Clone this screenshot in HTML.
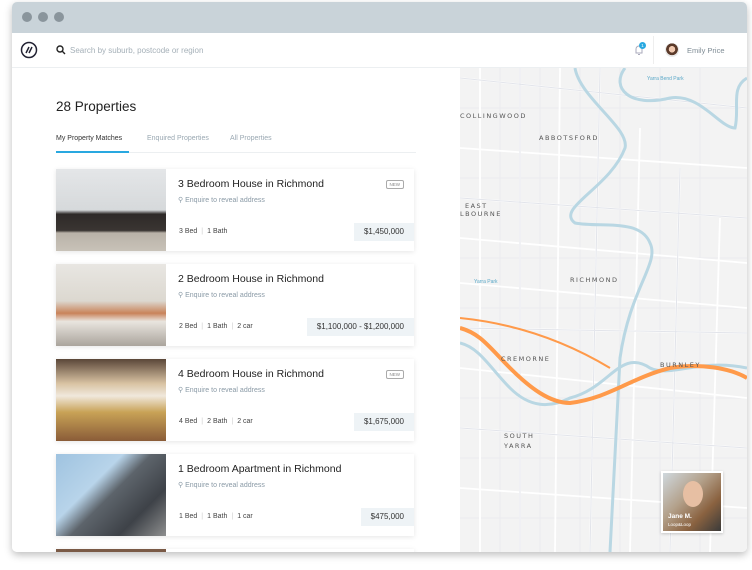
<!DOCTYPE html>
<html><head><meta charset="utf-8"><style>
*{margin:0;padding:0;box-sizing:border-box}
html,body{width:752px;height:570px;overflow:hidden}
body{background:#fff;font-family:"Liberation Sans",sans-serif;position:relative}
.win{position:absolute;left:12px;top:2px;width:735px;height:550px;border-radius:5px;overflow:hidden;box-shadow:0 3px 8px rgba(0,0,0,.25);background:#fff}
.title{height:31px;background:#c9d3d9;position:relative}
.dot{position:absolute;top:10px;width:10px;height:10px;border-radius:50%;background:#8a959c}
.hdr{position:absolute;top:31px;left:0;right:0;height:35px;border-bottom:1px solid #eceff1;background:#fff}
.list{position:absolute;left:0;top:66px;width:448px;bottom:0;background:#fff;overflow:hidden}
.map{position:absolute;left:448px;top:66px;right:0;bottom:0;background:#f3f3f3;overflow:hidden}
.card{position:absolute;left:44px;width:358px;height:82px;background:#fff;box-shadow:0 1px 5px rgba(0,0,0,.1)}
.card .img{position:absolute;left:0;top:0;width:110px;height:82px}
.card h3{position:absolute;left:122px;top:9px;font-size:10.5px;font-weight:normal;color:#222}
.card .addr{position:absolute;left:122px;top:27px;font-size:7px;color:#8a9aa6}
.card .meta{position:absolute;left:123px;top:59px;font-size:7px;color:#444}
.card .price{position:absolute;right:0;top:54px;height:18px;padding:0 10px;background:#eef3f6;font-size:8px;color:#333;line-height:18px}
.new{position:absolute;right:10px;top:11px;font-size:4.5px;color:#888;border:1px solid #aaa;border-radius:2px;padding:1px 3px}
.sep{color:#ccc;margin:0 4px}
</style></head><body>
<div class="win">
<div class="title"><div class="dot" style="left:10px"></div><div class="dot" style="left:26px"></div><div class="dot" style="left:42px"></div></div>
<div class="hdr">
<svg style="position:absolute;left:8px;top:8px" width="18" height="18" viewBox="0 0 18 18"><circle cx="9" cy="9" r="7.5" fill="none" stroke="#223" stroke-width="1.5"/><path d="M6 12 L9 6 M9 12 L12 6" stroke="#223" stroke-width="1.5" fill="none"/></svg>
<svg style="position:absolute;left:44px;top:12px" width="10" height="10" viewBox="0 0 10 10"><circle cx="4" cy="4" r="3" fill="none" stroke="#222" stroke-width="1.4"/><path d="M6.3 6.3 L9 9" stroke="#222" stroke-width="1.4"/></svg>
<div style="position:absolute;left:58px;top:13px;font-size:8px;color:#a5b0b8">Search by suburb, postcode or region</div>
<svg style="position:absolute;left:621px;top:11px" width="12" height="12" viewBox="0 0 12 12"><path d="M3 9 V5 a3 3 0 0 1 6 0 V9 Z M5 10.5 h2" fill="none" stroke="#aab" stroke-width="1"/></svg>
<div style="position:absolute;left:627px;top:9px;width:7px;height:7px;border-radius:50%;background:#29a8e0;color:#fff;font-size:4.5px;text-align:center;line-height:7px">1</div>
<div style="position:absolute;left:641px;top:3px;width:1px;height:28px;background:#eee"></div>
<div style="position:absolute;left:653px;top:10px;width:14px;height:14px;border-radius:50%;background:radial-gradient(circle at 50% 45%,#f0c9b0 30%,#5b3a2a 32%,#5b3a2a 55%,#e8e8e8 58%)"></div>
<div style="position:absolute;left:675px;top:13px;font-size:7.5px;color:#7f8c95">Emily Price</div>
</div>
<div class="list">
<div style="position:absolute;left:44px;top:31px;font-size:13.5px;color:#222">28 Properties</div>
<div style="position:absolute;left:44px;top:67px;font-size:7px;color:#333">My Property Matches</div>
<div style="position:absolute;left:135px;top:67px;font-size:7px;color:#9aa8b2">Enquired Properties</div>
<div style="position:absolute;left:218px;top:67px;font-size:7px;color:#9aa8b2">All Properties</div>
<div style="position:absolute;left:44px;top:84px;width:360px;height:1px;background:#eceff1"></div>
<div style="position:absolute;left:44px;top:83px;width:73px;height:2px;background:#29a8e0"></div>

<div class="card" style="top:101px"><div class="img" style="background:linear-gradient(180deg,#e4e6e8 0,#d6d9db 50%,#2e2a28 55%,#3a3532 75%,#b9b2a8 78%,#c8c2b8 100%)"></div><h3>3 Bedroom House in Richmond</h3><div class="new">NEW</div><div class="addr">⚲ Enquire to reveal address</div><div class="meta">3 Bed<span class="sep">|</span>1 Bath</div><div class="price">$1,450,000</div></div>
<div class="card" style="top:196px"><div class="img" style="background:linear-gradient(180deg,#e8e6e2 0,#dcd8d0 45%,#c9835a 60%,#e9e5df 70%,#aaa49c 100%)"></div><h3>2 Bedroom House in Richmond</h3><div class="addr">⚲ Enquire to reveal address</div><div class="meta">2 Bed<span class="sep">|</span>1 Bath<span class="sep">|</span>2 car</div><div class="price">$1,100,000 - $1,200,000</div></div>
<div class="card" style="top:291px"><div class="img" style="background:linear-gradient(180deg,#5a4638 0,#d9c3a3 30%,#f0e8dc 45%,#c8a256 65%,#8a5c38 100%)"></div><h3>4 Bedroom House in Richmond</h3><div class="new">NEW</div><div class="addr">⚲ Enquire to reveal address</div><div class="meta">4 Bed<span class="sep">|</span>2 Bath<span class="sep">|</span>2 car</div><div class="price">$1,675,000</div></div>
<div class="card" style="top:386px"><div class="img" style="background:linear-gradient(135deg,#9fc3e0 0,#b8d4ea 35%,#5d646b 50%,#3e4248 75%,#8e8f8f 100%)"></div><h3>1 Bedroom Apartment in Richmond</h3><div class="addr">⚲ Enquire to reveal address</div><div class="meta">1 Bed<span class="sep">|</span>1 Bath<span class="sep">|</span>1 car</div><div class="price">$475,000</div></div>
<div class="card" style="top:481px"><div class="img" style="background:#7a5a46"></div></div>
</div>
<div class="map">
<svg width="287" height="484" viewBox="0 0 287 484">
<g stroke="#e9e9ee" stroke-width="0.8" fill="none">
<path d="M0 40 H287 M0 110 H287 M0 190 H287 M0 240 H287 M0 330 H287 M0 390 H287 M0 450 H287 M40 0 V484 M80 0 V484 M120 0 V484 M160 0 V484 M200 0 V484 M240 0 V484"/>
</g>
<g stroke="#fff" stroke-width="1.8" fill="none">
<path d="M0 10 L287 40 M0 80 L287 100 M0 130 L287 150 M0 170 L287 195 M0 215 L287 240 M0 260 L287 265 M0 300 L287 330 M0 360 L287 380 M0 420 L287 440"/>
<path d="M20 0 V484 M60 0 V484 M100 0 L95 484 M140 0 L130 484 M180 60 L170 484 M220 100 L210 484 M260 150 L250 484"/>
</g>
<g stroke="#e2e4ea" stroke-width="1" fill="none"><path d="M0 10 L287 40 M0 130 L287 150 M0 260 L287 265 M0 360 L287 380 M60 0 V484 M140 0 L130 484 M220 100 L210 484"/></g>
<g stroke="#b9d7e3" stroke-width="3" fill="none">
<path d="M115 0 C120 30 170 60 165 80 C150 120 95 140 115 155 C140 160 180 150 190 175 C200 195 170 220 160 290 L150 484"/>
<path d="M165 0 C150 20 170 40 210 30 C240 25 260 60 275 60 C280 40 270 20 287 10"/>
<path d="M0 275 C20 280 30 300 50 320 C70 340 90 340 110 330 C150 320 160 280 190 300 C210 310 240 290 287 300"/>
</g>
<g stroke="#ff9a4a" stroke-width="4" fill="none">
<path d="M0 260 C20 265 30 280 50 300 C70 320 90 335 110 335 C150 330 170 310 210 300 C240 295 270 300 287 310"/>
</g>
<path d="M0 250 C50 255 100 270 150 300" stroke="#ff9a4a" stroke-width="2" fill="none"/>
<g font-family="DejaVu Sans,sans-serif" font-size="6.5" fill="#555" letter-spacing="1.5">
<text x="0" y="50">COLLINGWOOD</text><text x="79" y="72">ABBOTSFORD</text>
<text x="5" y="140">EAST</text><text x="0" y="148">LBOURNE</text>
<text x="110" y="214">RICHMOND</text><text x="41" y="293">CREMORNE</text>
<text x="200" y="299">BURNLEY</text><text x="44" y="370">SOUTH</text><text x="44" y="380">YARRA</text>
</g>
<g font-size="5" fill="#5aa8c8" font-family="Liberation Sans,sans-serif"><text x="187" y="12">Yarra Bend Park</text><text x="14" y="215">Yarra Park</text></g>
</svg>
<div style="position:absolute;left:201px;top:403px;width:62px;height:62px;border:2px solid #fff;background:linear-gradient(135deg,#cfd8de 0,#b3a08a 40%,#8a6240 70%,#3a3a3a 100%);box-shadow:0 1px 3px rgba(0,0,0,.2)">
<div style="position:absolute;left:20px;top:8px;width:20px;height:26px;border-radius:50%;background:#e7bfa3"></div>
<div style="position:absolute;left:5px;top:40px;font-size:6.5px;font-weight:bold;color:#fff">Jane M.</div>
<div style="position:absolute;left:5px;top:49px;font-size:4.5px;color:#fff">Loop&amp;Loop</div>
</div>
</div>
</div>
</body></html>
